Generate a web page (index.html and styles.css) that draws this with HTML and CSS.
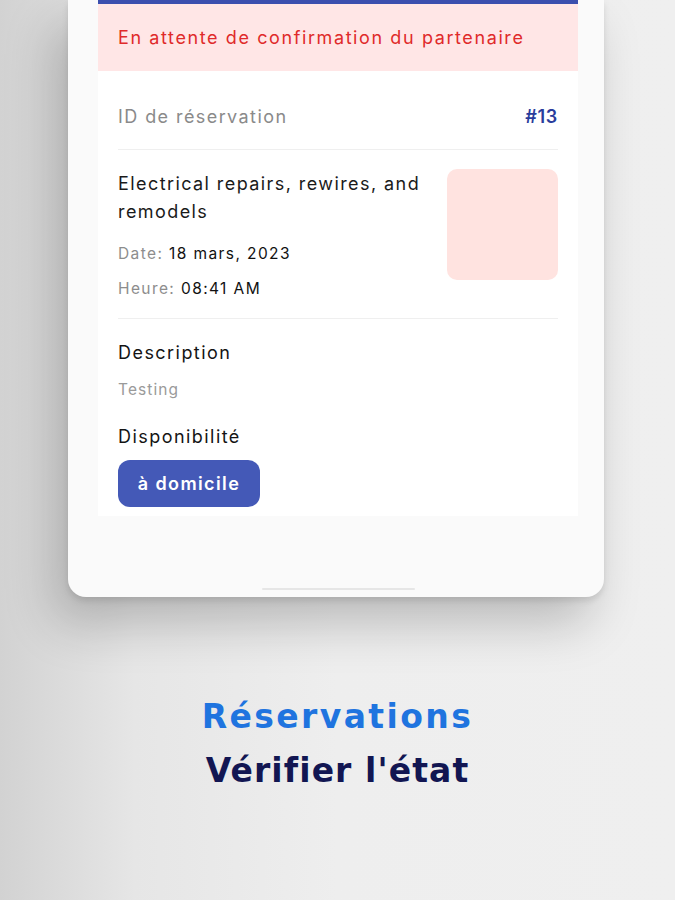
FILE: index.html
```html
<!DOCTYPE html>
<html lang="fr">
<head>
<meta charset="utf-8">
<link rel="stylesheet" href="styles.css">
</head>
<body>
<div class="stage">
  <div class="phone">
    <div class="card">
      <div class="bar"></div>
      <div class="banner">En attente de confirmation du partenaire</div>
      <div class="body">
        <div class="id-row">
          <span class="id-label">ID de réservation</span>
          <span class="id-value">#13</span>
        </div>
        <div class="service">
          <div class="service-info">
            <div class="service-title">Electrical repairs, rewires, and remodels</div>
            <div class="meta meta-date"><span class="meta-label">Date:</span> 18 mars, 2023</div>
            <div class="meta meta-time"><span class="meta-label">Heure:</span> 08:41 AM</div>
          </div>
          <div class="thumb"></div>
        </div>
        <div class="details">
          <div class="section-title">Description</div>
          <div class="desc">Testing</div>
          <div class="section-title avail">Disponibilité</div>
          <div class="chip">à domicile</div>
        </div>
      </div>
    </div>
    <div class="home-indicator"></div>
  </div>
  <div class="caption">
    <div class="caption-top">Réservations</div>
    <div class="caption-bottom">Vérifier l'état</div>
  </div>
</div>
</body>
</html>
```
FILE: styles.css
```css
* { box-sizing: border-box; }
html, body { margin: 0; padding: 0; }
body {
  width: 675px;
  height: 900px;
  overflow: hidden;
  background: linear-gradient(to right, #d2d2d2 0%, #e6e6e6 20%, #eeeeee 50%, #efefef 100%);
  font-family: Inter, "Open Sans", sans-serif;
}
.stage {
  display: flex;
  flex-direction: column;
  height: 900px;
}
.phone {
  margin-left: 68px;
  width: 536px;
  height: 597px;
  background: #fafafa;
  border-radius: 0 0 18px 18px;
  padding: 0 26px 0 30px;
  box-shadow: -14px 26px 50px rgba(0,0,0,0.22), 0 4px 6px rgba(0,0,0,0.10);
  display: flex;
  flex-direction: column;
  align-items: stretch;
}
.card {
  background: #ffffff;
  display: flex;
  flex-direction: column;
}
.bar {
  height: 4px;
  background: #3b4fae;
}
.banner {
  height: 67px;
  background: #ffe6e6;
  color: #e02a2a;
  font-size: 18px;
  letter-spacing: 1.6px;
  padding-left: 20px;
  display: flex;
  align-items: center;
}
.body {
  padding: 0 20px 9px;
}
.id-row {
  display: flex;
  justify-content: space-between;
  align-items: center;
  padding: 32px 0 18px;
  line-height: 28px;
  border-bottom: 1px solid #efefef;
}
.id-label {
  color: #8a8a8a;
  font-size: 18px;
  letter-spacing: 1.42px;
}
.id-value {
  color: #2a3d9c;
  font-size: 18px;
  font-weight: 600;
  letter-spacing: 0.7px;
}
.service {
  display: flex;
  justify-content: space-between;
  padding: 20px 0 17px;
  border-bottom: 1px solid #efefef;
}
.service-info {
  width: 312px;
}
.service-title {
  font-size: 18px;
  line-height: 28px;
  color: #1a1a1a;
  letter-spacing: 1.42px;
}
.meta {
  font-size: 15.5px;
  line-height: 24px;
  color: #111;
  letter-spacing: 1.4px;
}
.meta-date { margin-top: 16px; }
.meta-time { margin-top: 11px; }
.meta-label { color: #8d8d8d; }
.thumb {
  margin-top: -1px;
  width: 111px;
  height: 111px;
  border-radius: 10px;
  background: #ffe3e0;
}
.details {
  padding-top: 21px;
  display: flex;
  flex-direction: column;
  align-items: flex-start;
}
.section-title {
  font-size: 18px;
  line-height: 26px;
  color: #141414;
  letter-spacing: 1.45px;
}
.desc {
  margin-top: 13px;
  font-size: 15.5px;
  line-height: 22px;
  color: #9a9a9a;
  letter-spacing: 1.1px;
}
.avail { margin-top: 23px; }
.chip {
  margin-top: 10px;
  height: 47px;
  width: 142px;
  border-radius: 12px;
  background: #4459b7;
  color: #ffffff;
  font-size: 18px;
  font-weight: 600;
  letter-spacing: 1.4px;
  display: flex;
  align-items: center;
  justify-content: center;
}
.home-indicator {
  margin-top: auto;
  margin-bottom: 7px;
  align-self: center;
  width: 153px;
  height: 2px;
  border-radius: 1px;
  background: #e6e6e6;
}
.caption {
  margin-top: 93px;
  display: flex;
  flex-direction: column;
  align-items: center;
  font-family: "DejaVu Sans", Inter, sans-serif;
  font-weight: 700;
  font-size: 33px;
  line-height: 54px;
}
.caption-top { color: #1f74df; letter-spacing: 2.4px; }
.caption-bottom { color: #121652; letter-spacing: 1.1px; }
```
